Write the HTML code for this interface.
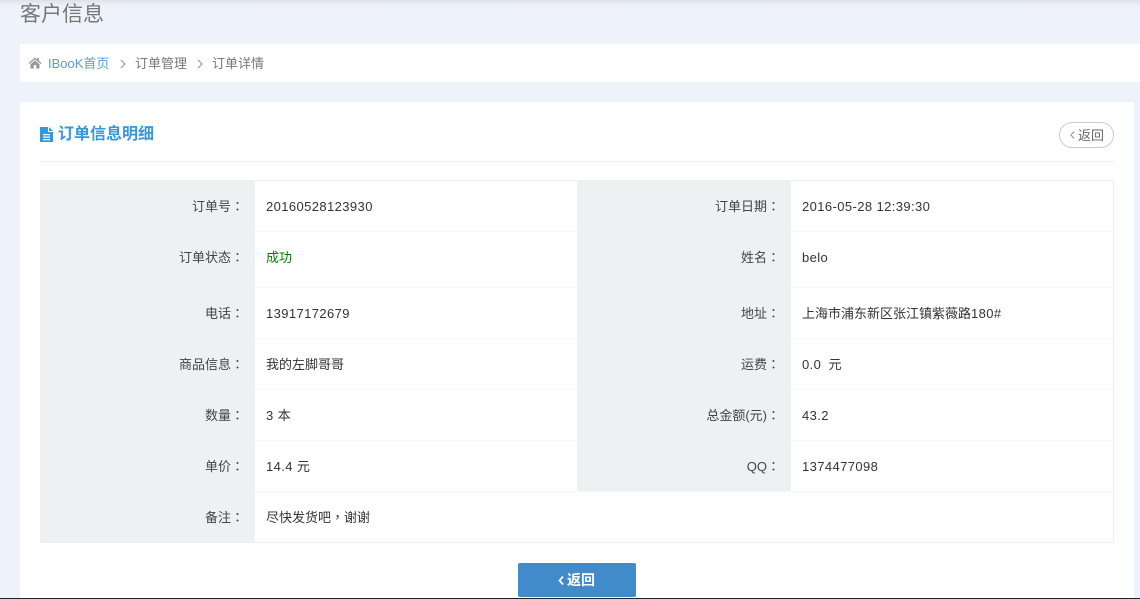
<!DOCTYPE html>
<html><head><meta charset="utf-8">
<style>
html,body{margin:0;padding:0;width:1140px;height:599px;overflow:hidden;background:#eef2fa;}
body{position:relative;font-family:"Liberation Sans","Noto Sans CJK SC",sans-serif;font-size:13px;color:#333;}
.a{position:absolute;white-space:nowrap;}
.t{position:absolute;white-space:nowrap;line-height:20px;}
.l{text-align:right;color:#444;}
.c{font-family:"Noto Sans CJK TC",sans-serif;}
.n{letter-spacing:.4px;}
.bg{position:absolute;background:#edf1f2;}
.h{position:absolute;height:0;border-top:1px dotted #eee;}
</style></head><body>
<div class="a" style="left:0;top:0;width:1140px;height:6px;background:linear-gradient(#dfe1e6,#eef2fa);"></div>
<div class="t" style="left:20px;top:1px;font-size:21px;line-height:28px;color:#777;">客户信息</div>

<div class="a" style="left:20px;top:44px;width:1120px;height:38px;background:#fff;"></div>
<svg class="a" style="left:28px;top:57px;" width="14" height="12" viewBox="0 0 14 12"><path d="M7 0.5L0.5 6l.8 1L7 2.2 12.7 7l.8-1L11 3.900V1H9.300v1.400zM2.500 7.200V11.500H5.800V8H8.200v3.500H11.500V7.200L7 3.400z" fill="#999"/></svg>
<div class="t" style="left:48px;top:54px;color:#5b9bd1;">IBooK首页</div>
<svg class="a" style="left:119px;top:59px;" width="8" height="10" viewBox="0 0 8 10"><path d="M2 1l4 4-4 4" fill="none" stroke="#aaa" stroke-width="1.400"/></svg>
<div class="t" style="left:135px;top:54px;color:#777;">订单管理</div>
<svg class="a" style="left:196px;top:59px;" width="8" height="10" viewBox="0 0 8 10"><path d="M2 1l4 4-4 4" fill="none" stroke="#aaa" stroke-width="1.400"/></svg>
<div class="t" style="left:212px;top:54px;color:#777;">订单详情</div>

<div class="a" style="left:20px;top:102px;width:1114px;height:497px;background:#fff;"></div>
<svg class="a" style="left:40px;top:127px;" width="13" height="15" viewBox="0 0 13 15"><path d="M0 0H8V5H13V15H0zM9 0L13 4H9zM3 7V8.200H10V7zM3 9.500V10.700H10V9.500zM3 12V13.200H10V12z" fill="#3598dc" fill-rule="evenodd"/></svg>
<div class="t" style="left:58px;top:125px;font-size:16px;font-weight:bold;color:#3598dc;">订单信息明细</div>
<div class="a" style="left:40px;top:161px;width:1074px;height:1px;background:#eee;"></div>

<div class="a" style="left:1059px;top:122px;width:53px;height:24px;border:1px solid #ccc;border-radius:13px;"></div>
<svg class="a" style="left:1069px;top:130px;" width="7" height="10" viewBox="0 0 7 10"><path d="M5 1.500L2 5l3 3.500" fill="none" stroke="#999" stroke-width="1.100"/></svg>
<div class="t" style="left:1078px;top:126px;color:#666;">返回</div>

<!-- table -->
<div class="a" style="left:40px;top:180px;width:1072px;height:361px;border:1px solid #eee;"></div>
<div class="bg" style="left:41px;top:181px;width:214px;height:361px;"></div>
<div class="bg" style="left:577px;top:181px;width:214px;height:310px;"></div>
<div class="h" style="left:255px;top:231px;width:322px;"></div><div class="h" style="left:791px;top:231px;width:322px;"></div>
<div class="h" style="left:255px;top:287px;width:322px;"></div><div class="h" style="left:791px;top:287px;width:322px;"></div>
<div class="h" style="left:255px;top:338px;width:322px;"></div><div class="h" style="left:791px;top:338px;width:322px;"></div>
<div class="h" style="left:255px;top:389px;width:322px;"></div><div class="h" style="left:791px;top:389px;width:322px;"></div>
<div class="h" style="left:255px;top:440px;width:322px;"></div><div class="h" style="left:791px;top:440px;width:322px;"></div>
<div class="h" style="left:255px;top:491px;width:858px;"></div>

<div class="t l" style="right:896px;top:196px;">订单号<span class="c">：</span></div>
<div class="t n" style="left:266px;top:197px;">20160528123930</div>
<div class="t l" style="right:360px;top:196px;">订单日期<span class="c">：</span></div>
<div class="t n" style="left:802px;top:197px;">2016-05-28 12:39:30</div>

<div class="t l" style="right:896px;top:247px;">订单状态<span class="c">：</span></div>
<div class="t" style="left:266px;top:248px;color:#008000;">成功</div>
<div class="t l" style="right:360px;top:247px;">姓名<span class="c">：</span></div>
<div class="t n" style="left:802px;top:248px;">belo</div>

<div class="t l" style="right:896px;top:303px;">电话<span class="c">：</span></div>
<div class="t n" style="left:266px;top:304px;">13917172679</div>
<div class="t l" style="right:360px;top:303px;">地址<span class="c">：</span></div>
<div class="t" style="left:802px;top:304px;">上海市浦东新区张江镇紫薇路<span class="n">180#</span></div>

<div class="t l" style="right:896px;top:354px;">商品信息<span class="c">：</span></div>
<div class="t" style="left:266px;top:355px;">我的左脚哥哥</div>
<div class="t l" style="right:360px;top:354px;">运费<span class="c">：</span></div>
<div class="t" style="left:802px;top:355px;white-space:pre;"><span class="n">0.0</span>  元</div>

<div class="t l" style="right:896px;top:405px;">数量<span class="c">：</span></div>
<div class="t" style="left:266px;top:406px;"><span class="n">3 </span>本</div>
<div class="t l" style="right:360px;top:405px;">总金额(元)<span class="c">：</span></div>
<div class="t n" style="left:802px;top:406px;">43.2</div>

<div class="t l" style="right:896px;top:456px;">单价<span class="c">：</span></div>
<div class="t" style="left:266px;top:457px;"><span class="n">14.4 </span>元</div>
<div class="t l" style="right:360px;top:456px;">QQ<span class="c">：</span></div>
<div class="t n" style="left:802px;top:457px;">1374477098</div>

<div class="t l" style="right:896px;top:507px;">备注<span class="c">：</span></div>
<div class="t" style="left:266px;top:507px;">尽快发货吧<span class="c">，</span>谢谢</div>

<div class="a" style="left:518px;top:563px;width:118px;height:34px;background:#428bca;border-radius:2px;"></div>
<svg class="a" style="left:557px;top:575px;" width="8" height="11" viewBox="0 0 8 11"><path d="M6 1.500L2.500 5.500 6 9.500" fill="none" stroke="#fff" stroke-width="1.800"/></svg>
<div class="t" style="left:567px;top:570px;color:#fff;font-size:14px;font-weight:bold;">返回</div>
<div class="a" style="left:0;top:598px;width:1140px;height:1px;background:#222;"></div>
</body></html>
